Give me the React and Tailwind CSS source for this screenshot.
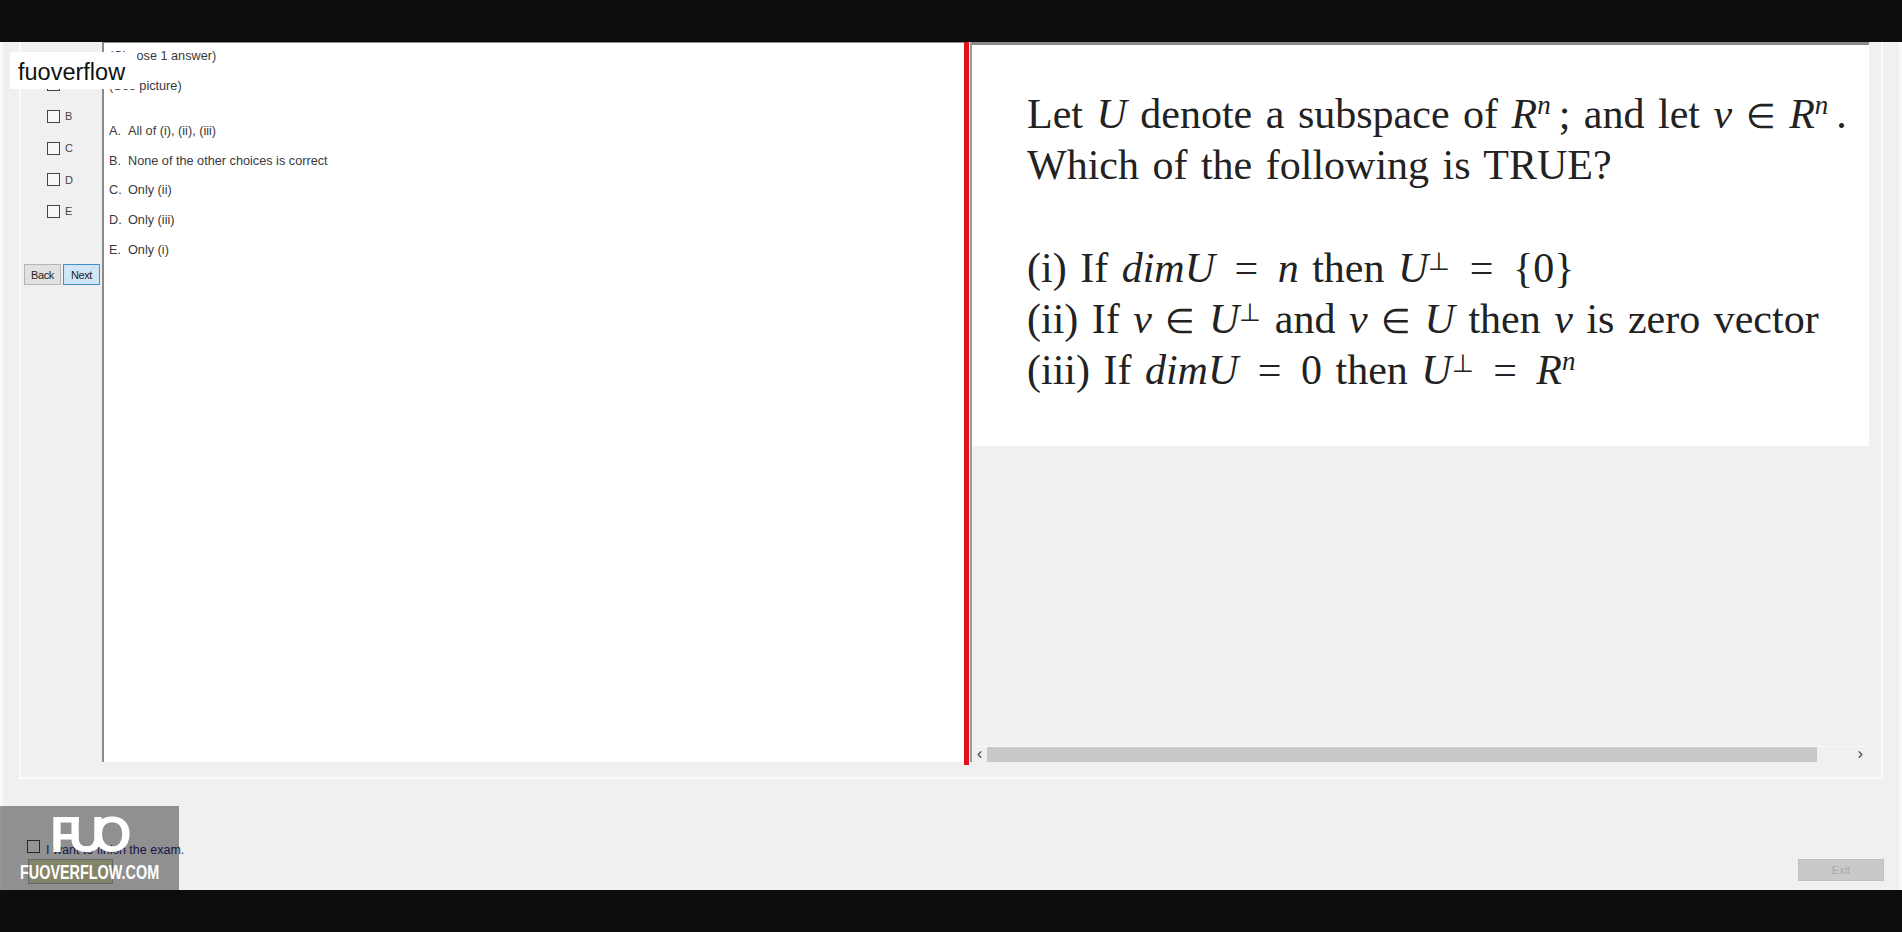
import React from "react";
import { ChevronLeft, ChevronRight } from "lucide-react";

const options = [
  ["A.", "All of (i), (ii), (iii)"],
  ["B.", "None of the other choices is correct"],
  ["C.", "Only (ii)"],
  ["D.", "Only (iii)"],
  ["E.", "Only (i)"],
];

const Check = () => <span className="block w-[13px] h-[13px] border border-[#444] bg-[#f8f8f8]" />;

const AnswerRow = ({ label }) => (
  <div className="flex items-center h-[31.7px] pl-[26px] gap-[5px] text-[11px] text-[#444]">
    <Check />
    <span>{label}</span>
  </div>
);

const I = ({ children }) => <i className="italic">{children}</i>;
const SupN = () => <span className="text-[27px] leading-none align-[14px] pr-[8px] italic">n</span>;
const Perp = () => <span className="text-[25px] leading-none align-[12px]">⊥</span>;
const Elem = () => <span className="text-[34px]">∈</span>;
const Eq = () => <span className="mx-[6px]">=</span>;

const MathLine = ({ children, className = "" }) => (
  <div className={`h-[51px] leading-[51px] whitespace-nowrap ${className}`}>{children}</div>
);

export default function App() {
  return (
    <div className="relative h-[932px] flex flex-col overflow-hidden bg-[#0d0d0d] font-['Liberation_Sans',Arial,sans-serif]">
      <div className="h-[42px] shrink-0" />

      <div className="h-[848px] shrink-0 bg-[#f0f0f0] border-x-[3px] border-[#f9f9f9]">
        <div className="ml-[16px] mr-[16px] h-[737px] flex border-2 border-t-0 border-[#fafafa]">
          <aside className="w-[81px] shrink-0 flex flex-col">
            <div className="pt-[27px]">
              {["A", "B", "C", "D", "E"].map((l) => (
                <AnswerRow key={l} label={l} />
              ))}
            </div>
            <div className="mt-[37px] ml-[3px] flex gap-[2px] text-[11px] text-[#222] tracking-[-0.4px]">
              <button className="w-[37px] h-[21px] border border-[#b5b5b5] bg-[#e1e1e1]">Back</button>
              <button className="w-[37px] h-[21px] border border-[#3f8fc8] bg-[#cfe6f7]">Next</button>
            </div>
          </aside>

          <section className="w-[862px] h-[720px] shrink-0 bg-white border-l-2 border-t border-[#8a8a8a] pl-[5px] text-[12.7px] text-[#3a3a3a]">
            <div className="h-[30px] pt-[6px] leading-[15px]">(Choose 1 answer)</div>
            <div className="h-[44px] pt-[6px] leading-[15px]">(See picture)</div>
            <div className="flex flex-col">
              {options.map(([k, t]) => (
                <div key={k} className="flex h-[29.6px] items-center">
                  <span className="w-[19px]">{k}</span>
                  <span>{t}</span>
                </div>
              ))}
            </div>
          </section>

          <div className="w-[5px] h-[723px] shrink-0 bg-[#e2101a]" />

          <section className="w-[899px] h-[720px] shrink-0 flex flex-col ml-[1px] border-l-2 border-[#9a9a9a]">
            <div className="h-[404px] bg-white border-t-[3px] border-[#8a8a8a] pl-[55px] pt-[44px] font-['Liberation_Serif',serif] text-[42px] text-[#222] [word-spacing:3px]">
              <MathLine>Let <I>U</I> denote a subspace of <I>R</I><SupN />; and let <I>v</I> <Elem /> <I>R</I><SupN />.</MathLine>
              <MathLine className="mb-[52px]">Which of the following is TRUE?</MathLine>
              <MathLine>(i) If <I>dimU</I> <Eq /> <I>n</I> then <I>U</I><Perp /> <Eq /> {"{0}"}</MathLine>
              <MathLine>(ii) If <I>v</I> <Elem /> <I>U</I><Perp /> and <I>v</I> <Elem /> <I>U</I> then <I>v</I> is zero vector</MathLine>
              <MathLine>(iii) If <I>dimU</I> <Eq /> 0 then <I>U</I><Perp /> <Eq /> <I>R</I><SupN /></MathLine>
            </div>
            <div className="flex-1 flex flex-col justify-end">
              <div className="h-[16px] flex items-center border-t border-[#f8f8f8] text-[#555]">
                <span className="w-[15px] flex justify-center">
                  <ChevronLeft size={11} strokeWidth={3} />
                </span>
                <div className="w-[830px] h-[15px] bg-[#c9c9c9]" />
                <span className="flex-1 flex justify-end pr-[3px]">
                  <ChevronRight size={11} strokeWidth={3} />
                </span>
              </div>
            </div>
          </section>
        </div>

        <div className="ml-[24px] mr-[15px] mt-[61px] flex items-start justify-between">
          <div>
            <div className="flex items-start gap-[6px] text-[12.5px] leading-[15px] text-[#2b2a78]">
              <Check />
              <span className="pt-[3px]">I want to finish the exam.</span>
            </div>
            <button className="mt-[1px] ml-[1px] block w-[85px] h-[25px] bg-[#dcdcb0] border border-[#aaa]" />
          </div>
          <button className="mt-[19px] w-[86px] h-[22px] bg-[#c9c9c9] border border-[#c0c0c0] text-[11px] text-[#aaaaaa]">Exit</button>
        </div>
      </div>

      <div className="h-[42px] shrink-0" />

      {/* site label and watermark sit on top of the screenshot */}
      <div className="absolute left-[10px] top-[52px] w-[127px] h-[37px] bg-white flex items-center pl-[8px] pt-[4px] text-[23.5px] text-[#111]">
        fuoverflow
      </div>
      <div className="absolute left-0 top-[806px] w-[179px] h-[84px] bg-black/40 text-white overflow-hidden">
        <div className="absolute left-[50px] top-[1px] text-[50px] leading-[56px] font-bold tracking-[-12px]">FUO</div>
        <div className="absolute left-[20px] top-[54px] text-[20px] leading-[24px] font-bold scale-x-[0.72] origin-left whitespace-nowrap">
          FUOVERFLOW.COM
        </div>
      </div>
    </div>
  );
}
